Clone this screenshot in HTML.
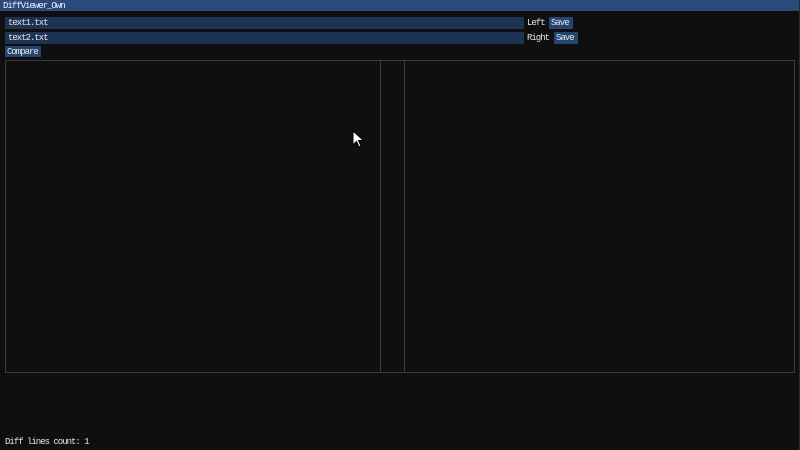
<!DOCTYPE html>
<html><head><meta charset="utf-8"><style>
html,body{margin:0;padding:0;width:800px;height:450px;overflow:hidden;background:#0f0e11;}
body{position:relative;font-family:"Liberation Mono",monospace;font-size:9px;letter-spacing:-1px;color:#e6e6e6;}
.a{position:absolute;}
.title{left:0;top:0;width:800px;height:11px;background:#2a4a79;}
.t{line-height:11px;white-space:pre;}
.inp{background:#1e3252;height:12px;}
.btn{background:#24456f;height:11px;}
.border{position:absolute;right:0;top:0;width:1px;height:450px;background:#2a2a30;}
</style></head><body>
<div class="a title"></div>
<div class="a t" style="left:3px;top:1px;color:#eef">DiffViewer_Own</div>
<div class="a inp" style="left:5px;top:17px;width:519px"></div>
<div class="a t" style="left:8px;top:18px">text1.txt</div>
<div class="a t" style="left:527px;top:18px">Left</div>
<div class="a btn" style="left:549px;top:17px;width:24px;height:12px"></div>
<div class="a t" style="left:551px;top:18px">Save</div>
<div class="a inp" style="left:5px;top:32px;width:519px"></div>
<div class="a t" style="left:8px;top:33px">text2.txt</div>
<div class="a t" style="left:527px;top:33px">Right</div>
<div class="a btn" style="left:554px;top:32px;width:24px;height:12px"></div>
<div class="a t" style="left:556px;top:33px">Save</div>
<div class="a btn" style="left:5px;top:46px;width:36px"></div>
<div class="a t" style="left:7px;top:47px">Compare</div>
<div class="a" style="left:5px;top:60px;width:788px;height:311px;border:1px solid #3a3a40"></div>
<div class="a" style="left:380px;top:60px;width:1px;height:312px;background:#3a3a40"></div>
<div class="a" style="left:404px;top:60px;width:1px;height:312px;background:#3a3a40"></div>
<div class="a t" style="left:5px;top:437px">Diff lines count: 1</div>
<div class="border"></div>
<svg class="a" style="left:352px;top:130px" width="14" height="20" viewBox="0 0 14 20"><path d="M1 1 L1 15 L4.5 11.5 L7 17 L9 16 L6.5 10.5 L11.5 10.5 Z" fill="#fff" stroke="#000" stroke-width="1"/></svg>
</body></html>
